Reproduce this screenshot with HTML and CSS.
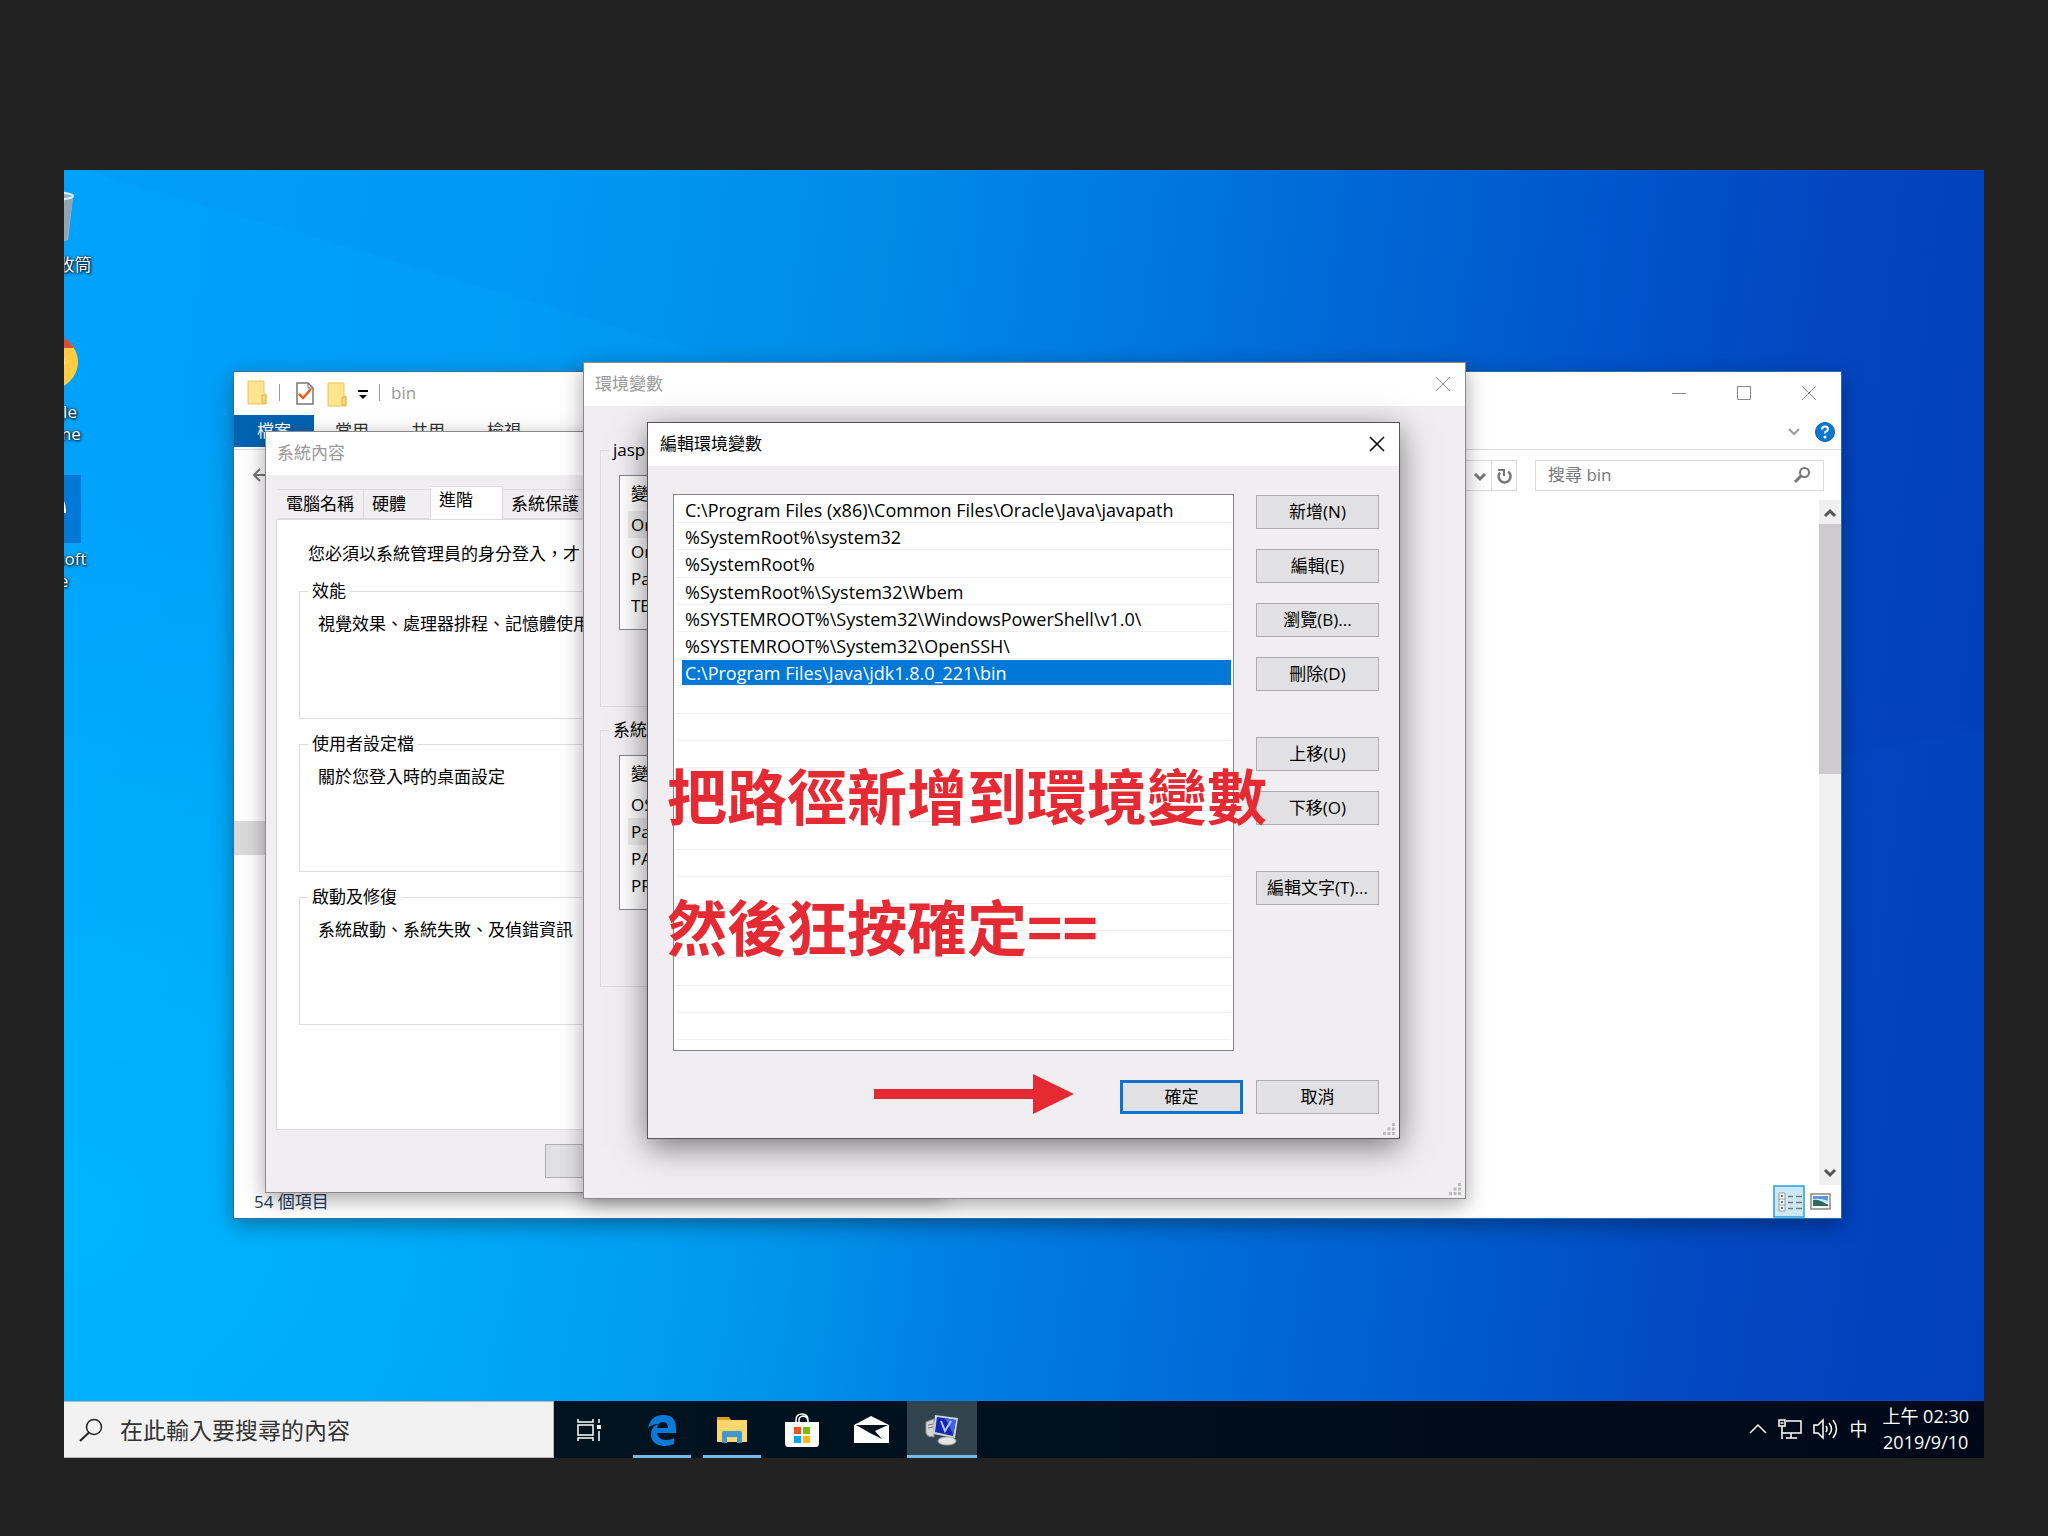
FILE: index.html
```html
<!DOCTYPE html>
<html lang="zh-Hant">
<head>
  <meta charset="UTF-8">
  <title>編輯環境變數</title>
  <link rel="stylesheet" href="styles.css">
</head>
<body>
  <div class="screen">
    <main class="desktop">
      <svg class="beams" viewBox="0 0 1920 1231" preserveAspectRatio="none">
        <polygon points="20,0 800,230 1920,560 1920,0" fill="#0050c8" opacity="0.04"/>
        <polygon points="0,900 1920,560 1920,1231 0,1231" fill="#00a0ff" opacity="0.03"/>
      </svg>

      <div class="shortcuts">
        <div class="shortcut">
          <svg width="68" height="68" viewBox="0 0 68 68">
            <path d="M10 16l5 43q19 5 38 0l5-43z" fill="#a9bcc6"/>
            <path d="M50 17l8-1-6 43-8 2z" fill="#8fa5b1"/>
            <ellipse cx="34" cy="15" rx="24" ry="4" fill="#7fb4d6" stroke="#dfe9ee" stroke-width="2"/>
          </svg>
          <span>資源回收筒</span>
        </div>
        <div class="shortcut">
          <svg width="68" height="68" viewBox="0 0 68 68">
            <circle cx="36" cy="34" r="27" fill="#fc4"/>
            <path d="M12 20A27 27 0 0 1 59 20z" fill="#e04a35"/>
            <path d="M12 20A27 27 0 0 0 30 60L38 40z" fill="#2ba24c"/>
            <circle cx="36" cy="34" r="12" fill="#4285f4" stroke="#fff" stroke-width="3"/>
          </svg>
          <span>Google<br>Chrome</span>
        </div>
        <div class="shortcut">
          <svg width="68" height="68" viewBox="0 0 68 68">
            <path d="M0 0h66v68H0z" fill="#0078d7"/>
            <path d="M13 38q2-22 20-22 18 0 18 22H25q2 10 22 4v8q-30 8-32-12z" fill="#fff"/>
          </svg>
          <span>Microsoft<br>Edge</span>
        </div>
      </div>

      <!-- file explorer -->
      <section class="window explorer">
        <header class="titlebar">
          <svg class="quick" width="160" height="28" viewBox="0 0 160 28">
            <path d="M1 2h16v13h2v10H1z" fill="#ffe58f" stroke="#e8c55a"/>
            <path d="M15 24v-8h4v8z" fill="#f7d774" stroke="#e0b94c"/>
            <path d="M32.500 5v17M132.500 5v17" stroke="#999"/>
            <path d="M50 4h11l5 5v16H50z" fill="#fff" stroke="#777" stroke-width="1.500"/>
            <path d="M61 4v5h5" fill="none" stroke="#777"/>
            <path d="M52 15l4 4 8-9" fill="none" stroke="#e8601c" stroke-width="2.500"/>
            <path d="M81 4h16v13h2v10H81z" fill="#ffe58f" stroke="#e8c55a"/>
            <path d="M95 26v-8h4v8z" fill="#f7d774" stroke="#e0b94c"/>
            <path d="M111 11h10v2h-10zM112 16h8l-4 4z" fill="#000"/>
          </svg>
          <h2 class="dim">bin</h2>
          <button class="control" aria-label="最小化"><svg width="16" height="16"><path d="M1 8.500h14" stroke="#888"/></svg></button>
          <button class="control" aria-label="最大化"><svg width="16" height="16"><path d="M1.500 1.500h13v13h-13z" fill="none" stroke="#888"/></svg></button>
          <button class="control" aria-label="關閉"><svg width="16" height="16"><path d="M1 1l14 14M15 1L1 15" stroke="#888"/></svg></button>
        </header>
        <nav class="ribbon">
          <button class="file">檔案</button>
          <button>常用</button>
          <button>共用</button>
          <button>檢視</button>
          <svg class="ribbon-end" width="50" height="22" viewBox="0 0 50 22">
            <path d="M3 8l5 5 5-5" fill="none" stroke="#999" stroke-width="2"/>
            <circle cx="39" cy="11" r="9.500" fill="#0a78d0" stroke="#0b5ea6"/>
            <path d="M36 8.500q0-3 3-3t3 2.500q0 1.500-2 2.500-1 .5-1 2" fill="none" stroke="#fff" stroke-width="2"/>
            <circle cx="39" cy="16" r="1.500" fill="#fff"/>
          </svg>
        </nav>
        <div class="address">
          <svg class="back" width="20" height="20" viewBox="0 0 20 20"><path d="M10 4l-6 6 6 6M4 10h14" fill="none" stroke="#777" stroke-width="2"/></svg>
          <div class="path">
            <svg width="51" height="29" viewBox="0 0 51 29">
              <path d="M10 13l5 5 5-5" fill="none" stroke="#777" stroke-width="3"/>
              <path d="M26.500 0v29" stroke="#d9d9d9"/>
              <path d="M35 11.500a6 6 0 1 0 8-1" fill="none" stroke="#777" stroke-width="2.500"/>
              <path d="M33 9h6v6" fill="none" stroke="#777" stroke-width="2"/>
            </svg>
          </div>
          <label class="search">
            <input type="text" placeholder="搜尋 bin" aria-label="搜尋 bin">
            <svg width="18" height="18" viewBox="0 0 18 18"><circle cx="11.500" cy="6.500" r="4.500" fill="none" stroke="#777" stroke-width="2"/><path d="M8 10l-6 6" stroke="#777" stroke-width="3"/></svg>
          </label>
        </div>
        <div class="files">
          <div class="tree"><div class="tree-selected"></div></div>
          <div class="scrollbar">
            <svg width="22" height="24" viewBox="0 0 22 24"><path d="M6 16l5-5 5 5" fill="none" stroke="#555" stroke-width="3"/></svg>
            <div class="thumb"></div>
            <svg width="22" height="24" viewBox="0 0 22 24"><path d="M6 9l5 5 5-5" fill="none" stroke="#555" stroke-width="3"/></svg>
          </div>
        </div>
        <footer class="status">
          <span>54 個項目</span>
          <svg width="68" height="33" viewBox="0 0 68 33">
            <path d="M1 1h30v31H1z" fill="#cce8f6" stroke="#26a0da" stroke-width="1.500"/>
            <path d="M6 8h6v18H6zM6 14h6M6 20h6" fill="#fff" stroke="#999"/>
            <path d="M8 11h2M8 17h2M8 23h2" stroke="#3a78c0" stroke-width="2"/>
            <path d="M15 11.500h5M23 11.500h6M15 17.500h5M23 17.500h6M15 23.500h5M23 23.500h6" stroke="#777" stroke-width="1.500"/>
            <path d="M38 9h19v15H38z" fill="#fff" stroke="#888" stroke-width="1.500"/>
            <path d="M40 11h15v10H40z" fill="#5a95e0"/>
            <path d="M40 14q8-1 15 2v3H40z" fill="#d5eaf8"/>
            <path d="M40 15q6-1 15 5v1H40z" fill="#2f6b5a"/>
          </svg>
        </footer>
      </section>

      <!-- system properties -->
      <section class="window system">
        <header class="titlebar"><h2 class="dim">系統內容</h2></header>
        <div class="tabs">
          <button class="tab">電腦名稱</button>
          <button class="tab">硬體</button>
          <button class="tab active">進階</button>
          <button class="tab">系統保護</button>
        </div>
        <div class="panel">
          <p class="intro">您必須以系統管理員的身分登入，才</p>
          <fieldset class="group">
            <legend>效能</legend>
            <p>視覺效果、處理器排程、記憶體使用</p>
          </fieldset>
          <fieldset class="group">
            <legend>使用者設定檔</legend>
            <p>關於您登入時的桌面設定</p>
          </fieldset>
          <fieldset class="group">
            <legend>啟動及修復</legend>
            <p>系統啟動、系統失敗、及偵錯資訊</p>
          </fieldset>
        </div>
        <div class="system-foot"><button class="btn" aria-label="確定"></button></div>
      </section>

      <!-- environment variables -->
      <section class="window variables">
        <header class="titlebar">
          <h2 class="dim">環境變數</h2>
          <button class="close" aria-label="關閉"><svg width="16" height="16"><path d="M1 1l14 14M15 1L1 15" stroke="#999"/></svg></button>
        </header>
        <div class="variables-body">
          <fieldset class="group">
            <legend>jasp</legend>
            <div class="listview">
              <table>
                <tr><th>變</th></tr>
                <tr class="marked"><td>On</td></tr>
                <tr><td>On</td></tr>
                <tr><td>Pa</td></tr>
                <tr><td>TE</td></tr>
              </table>
            </div>
          </fieldset>
          <fieldset class="group">
            <legend>系統</legend>
            <div class="listview">
              <table>
                <tr><th>變</th></tr>
                <tr><td>OS</td></tr>
                <tr class="marked"><td>Pa</td></tr>
                <tr><td>PA</td></tr>
                <tr><td>PR</td></tr>
              </table>
            </div>
          </fieldset>
        </div>
        <svg class="grip" width="12" height="12"><path d="M9 0h3v3H9zM9 4.500h3v3H9zM9 9h3v3H9zM4.500 4.500h3v3h-3zM4.500 9h3v3h-3zM0 9h3v3H0z" fill="#bbb"/></svg>
      </section>

      <!-- edit environment variable -->
      <section class="window edit">
        <header class="titlebar">
          <h2>編輯環境變數</h2>
          <button class="close" aria-label="關閉"><svg width="16" height="16"><path d="M1 1l14 14M15 1L1 15" stroke="#000" stroke-width="1.500"/></svg></button>
        </header>
        <div class="edit-body">
          <ul class="paths">
            <li><span>C:\Program Files (x86)\Common Files\Oracle\Java\javapath</span></li>
            <li><span>%SystemRoot%\system32</span></li>
            <li><span>%SystemRoot%</span></li>
            <li><span>%SystemRoot%\System32\Wbem</span></li>
            <li><span>%SYSTEMROOT%\System32\WindowsPowerShell\v1.0\</span></li>
            <li><span>%SYSTEMROOT%\System32\OpenSSH\</span></li>
            <li class="selected"><span>C:\Program Files\Java\jdk1.8.0_221\bin</span></li>
            <li></li><li></li><li></li><li></li><li></li><li></li>
            <li></li><li></li><li></li><li></li><li></li><li></li><li></li>
          </ul>
          <div class="actions">
            <div class="action-group">
              <button class="btn">新增(N)</button>
              <button class="btn">編輯(E)</button>
              <button class="btn">瀏覽(B)...</button>
              <button class="btn">刪除(D)</button>
            </div>
            <div class="action-group">
              <button class="btn">上移(U)</button>
              <button class="btn">下移(O)</button>
            </div>
            <div class="action-group">
              <button class="btn">編輯文字(T)...</button>
            </div>
          </div>
        </div>
        <div class="edit-foot">
          <button class="btn primary">確定</button>
          <button class="btn">取消</button>
        </div>
        <svg class="grip" width="12" height="12"><path d="M9 0h3v3H9zM9 4.500h3v3H9zM9 9h3v3H9zM4.500 4.500h3v3h-3zM4.500 9h3v3h-3zM0 9h3v3H0z" fill="#bbb"/></svg>
      </section>

      <!-- red notes over the dialog -->
      <div class="note">
        <p>把路徑新增到環境變數</p>
        <p>然後狂按確定==</p>
      </div>
      <svg class="arrow" width="200" height="40" viewBox="0 0 200 40"><path d="M0 15h159V0l41 20-41 20V25H0z" fill="#e52a33"/></svg>
    </main>

    <footer class="taskbar">
      <label class="task-search">
        <svg width="24" height="24" viewBox="0 0 24 24"><circle cx="15" cy="9" r="7.500" fill="none" stroke="#222" stroke-width="1.500"/><path d="M10 14.500L1 23" stroke="#222" stroke-width="2"/></svg>
        <input type="text" placeholder="在此輸入要搜尋的內容" aria-label="在此輸入要搜尋的內容">
      </label>
      <button class="task view" aria-label="工作檢視">
        <svg width="26" height="24" viewBox="0 0 26 24" fill="none" stroke="#fff" stroke-width="1.500"><path d="M2 1v3h15V1M2 7h15v10H2zM2 23v-3h15v3M23 1v4M23 13v10"/><path d="M21 7h4v4h-4z" fill="#fff" stroke="none"/></svg>
      </button>
      <button class="task open" aria-label="Edge">
        <svg width="30" height="32" viewBox="0 0 30 32"><path d="M1 14Q4 1 16 1q13 0 13 13v5H10q1 7 9 7 5 0 8-2v6q-4 2-10 2Q4 31 4 20 4 13 11 10 5 10 1 14zM10 14h11q0-6-5-6-5 0-6 6z" fill="#0a7ad8"/></svg>
      </button>
      <button class="task open" aria-label="檔案總管">
        <svg width="32" height="28" viewBox="0 0 32 28"><path d="M1 1h12l2 3H1z" fill="#dd9a13"/><path d="M1 4h30v22H1z" fill="#ffd76a"/><path d="M6 27V17q0-2 2-2h16q2 0 2 2v10h-5v-6H11v6z" fill="#3f97d3"/></svg>
      </button>
      <button class="task" aria-label="Microsoft Store">
        <svg width="34" height="34" viewBox="0 0 34 34"><path d="M11 12V7q0-6 6-6t6 6v5M14 9V6q1-3 5-3 4 1 4 6" fill="none" stroke="#fff" stroke-width="1.500"/><path d="M0 9h34v21q0 4-3 4H3q-3 0-3-4z" fill="#fff"/><path d="M9 14h7v7H9z" fill="#f25022"/><path d="M18 14h7v7h-7z" fill="#7fba00"/><path d="M9 23h7v7H9z" fill="#00a4ef"/><path d="M18 23h7v7h-7z" fill="#ffb900"/></svg>
      </button>
      <button class="task" aria-label="郵件">
        <svg width="36" height="28" viewBox="0 0 36 28"><path d="M0 9L17 0l18 9v18H0z" fill="#fff"/><path d="M2 9h32l-13 6 7 8-12-6z" fill="#06131d"/></svg>
      </button>
      <button class="task running" aria-label="系統內容">
        <svg width="34" height="32" viewBox="0 0 34 32"><path d="M1 8l8-3v18l-6-1-2-3z" fill="#d5d7d2" stroke="#8d9496"/><path d="M3 11l5-1M3 14l5-1" stroke="#777"/><ellipse cx="22" cy="27" rx="9" ry="4" fill="#e4e4e4" stroke="#aaa"/><path d="M10 1l23 3-3 20-22-4z" fill="#c9d2dc"/><path d="M12 3l19 3-3 16-18-4z" fill="#1226b4"/><path d="M20 4l11 2-3 14z" fill="#3f63e6"/><path d="M16 7l4 10 6-10" fill="none" stroke="#b9c9ff" stroke-width="2"/></svg>
      </button>
      <div class="tray">
        <svg width="18" height="12" viewBox="0 0 18 12"><path d="M1 10l8-8 8 8" fill="none" stroke="#fff" stroke-width="1.500"/></svg>
        <svg width="26" height="22" viewBox="0 0 26 22" fill="none" stroke="#fff" stroke-width="1.500"><path d="M9 3h15v12H5M14 15v5M9 20h11M2 2h6v6H2zM5 8v13M3.500 5h3"/></svg>
        <svg width="26" height="22" viewBox="0 0 26 22" fill="none" stroke="#fff" stroke-width="1.500"><path d="M1 7h4l5-5v18l-5-5H1zM13 8q2 3 0 6M16 5q5 6 0 12M20 2q7 9 0 18"/></svg>
        <span class="ime">中</span>
        <div class="clock">上午 02:30<br>2019/9/10</div>
      </div>
    </footer>
  </div>
</body>
</html>
```
FILE: styles.css
```css
* { box-sizing: border-box; }
body { margin: 0; background: #222; color: #000; font: 17px/22px "Open Sans", "Noto Sans CJK TC", sans-serif; }
p, h2, ul { margin: 0; padding: 0; font-size: 17px; font-weight: normal; }
button, input { font: inherit; color: inherit; border: 0; background: none; padding: 0; margin: 0; }
input { outline: 0; min-width: 0; }
svg { display: block; flex: none; }

.screen { display: flex; flex-direction: column; min-height: 100vh; padding: 170px 64px 78px; }
.desktop {
  position: relative; flex: 1; min-height: 1100px; overflow: hidden;
  background:
    radial-gradient(ellipse 900px 800px at 0% 85%, rgba(0,184,255,.9), rgba(0,180,255,0)),
    linear-gradient(97deg, #00a2fb 0%, #009df5 22%, #008ee9 40%, #0076de 55%, #0058cc 74%, #0446c0 86%, #033db8 100%);
}
.beams { position: absolute; inset: 0; width: 100%; height: 100%; }

/* desktop icons */
.shortcuts { position: absolute; left: -65px; top: 11px; width: 100px; display: grid; grid-auto-rows: 147px; }
.shortcut { display: flex; flex-direction: column; align-items: center; gap: 5px; color: #fff; text-align: center; text-shadow: 1px 1px 3px #000, 0 0 2px #000; }
.shortcut span { white-space: nowrap; }

/* windows */
.window { position: absolute; display: flex; flex-direction: column; background: #f0eef0; border: 1px solid #8a8a8a; box-shadow: 0 6px 20px rgba(0,0,0,.35); }
.titlebar { display: flex; align-items: center; height: 43px; background: #fff; padding: 0 0 2px 11px; flex: none; }
.titlebar h2 { flex: 1; }
.titlebar .dim { color: #999; }
.control { width: 65px; height: 41px; display: grid; place-items: center; }
.close { width: 44px; height: 41px; display: grid; place-items: center; }
.btn { width: 123px; height: 34px; background: #e1e0e2; border: 1px solid #adadad; line-height: 22px; white-space: nowrap; }
.btn.primary { border: 3px solid #0a74cf; }
.grip { position: absolute; right: 4px; bottom: 3px; }
.group { min-width: 0; margin: 0; padding: 0; border: 1px solid #dcdcdc; }
.group legend { margin-left: -10px; padding: 0 4px; }

/* file explorer */
.explorer { left: 169px; right: 142px; top: 201px; height: 848px; background: #fff; border-color: #2a6fa8; }
.explorer .titlebar { padding-left: 13px; }
.explorer .quick { margin-right: -16px; }
.ribbon { display: flex; height: 35px; border-bottom: 1px solid #dadbdc; color: #333; }
.ribbon button { width: 76px; height: 32px; }
.ribbon .file { width: 80px; background: #0063b1; color: #fff; }
.ribbon-end { margin: 6px 5px 0 auto; }
.address { display: flex; align-items: center; height: 50px; padding: 0 17px 0 16px; color: #777; }
.path { flex: 1; height: 31px; border: 1px solid #d9d9d9; margin: 0 18px 0 90px; display: flex; justify-content: flex-end; }
.search { display: flex; align-items: center; width: 289px; height: 31px; border: 1px solid #d9d9d9; padding: 0 12px; }
.search input { flex: 1; }
.search input::placeholder { color: #777; opacity: 1; }
.files { flex: 1; display: flex; justify-content: space-between; }
.tree { width: 220px; padding-top: 321px; }
.tree-selected { height: 34px; background: #d9d9d9; }
.scrollbar { width: 22px; background: #f0f0f0; display: flex; flex-direction: column; }
.thumb { height: 250px; background: #cdcbcd; margin-bottom: auto; }
.status { height: 33px; display: flex; align-items: center; justify-content: space-between; padding-left: 20px; color: #1e395b; }

/* system properties */
.system { left: 201px; top: 261px; width: 681px; height: 762px; }
.tabs { display: flex; align-items: flex-end; height: 44px; padding: 0 12px; }
.tab { height: 30px; min-width: 67px; padding: 0 9px 0 8px; text-align: left; background: #f0eef0; border: 1px solid #dcdcdc; border-left: 0; }
.tab.active { width: 72px; height: 33px; background: #fff; border-bottom: 0; padding-bottom: 6px; }
.panel { flex: 1; margin: 0 10px; padding: 23px 22px; background: #fff; border: 1px solid #dcdcdc; }
.intro { margin: 0 0 15px 9px; white-space: nowrap; }
.panel .group { height: 139px; padding: 11px 18px; margin-bottom: 14px; }
.system-foot { display: flex; padding: 14px 0 14px 279px; }

/* environment variables */
.variables { left: 519px; top: 192px; width: 883px; height: 837px; }
.variables-body { width: 800px; padding: 33px 16px; }
.variables .group { height: 268px; padding: 14px 18px; margin-bottom: 12px; }
.listview { height: 155px; background: #fff; border: 1px solid #828790; padding-left: 8px; }
.listview table { width: 100%; border-collapse: collapse; }
.listview th { height: 35px; font-weight: normal; text-align: left; padding: 0 3px; }
.listview td { height: 27px; padding: 0 3px; }
.marked { background: #eee; }

/* edit dialog */
.edit { left: 583px; top: 252px; width: 753px; height: 717px; border-color: #555; box-shadow: 0 8px 30px rgba(0,0,0,.5); }
.edit .titlebar { padding-left: 12px; }
.edit-body { display: flex; gap: 22px; padding: 28px 20px 0 25px; }
.paths { flex: 1; height: 557px; background: #fff; border: 1px solid #828790; list-style: none; display: grid; grid-template-rows: repeat(20, 1fr); padding: 1px 2px 10px; }
.paths li { border-bottom: 1px solid #eef0f4; padding: 1px 0 0 6px; min-height: 0; }
.paths span { display: block; height: 25px; line-height: 26px; padding: 0 3px; font-size: 18px; white-space: nowrap; }
.paths .selected span { background: #0078d7; color: #fff; }
.actions { display: flex; flex-direction: column; gap: 46px; padding-top: 1px; }
.action-group { display: flex; flex-direction: column; gap: 20px; }
.edit-foot { display: flex; justify-content: flex-end; gap: 13px; padding: 29px 20px; }

/* notes */
.note { position: absolute; left: 603px; top: 558px; color: #e52a33; }
.note p { font-size: 60px; line-height: 131px; font-weight: bold; font-family: "Noto Sans CJK TC", sans-serif; white-space: nowrap; }
.arrow { position: absolute; left: 810px; top: 904px; }

/* taskbar */
.taskbar { display: flex; height: 57px; background: linear-gradient(90deg, #001722, #00101c 50%, #000818); color: #fff; }
.task-search { display: flex; align-items: center; width: 490px; gap: 17px; padding: 0 15px; background: #f2f2f2; border: 1px solid #bbb; border-left: 0; }
.task-search input { flex: 1; font-size: 23px; line-height: 30px; height: 34px; }
.task-search input::placeholder { color: #333; opacity: 1; }
.task { width: 70px; display: grid; place-items: center; position: relative; }
.task.view { margin-right: 3px; }
.task.open::after, .task.running::after { content: ""; position: absolute; bottom: 0; left: 6px; right: 6px; height: 3px; background: #76b9ed; }
.task.running { background: #33434d; }
.task.running::after { left: 0; right: 0; }
.tray { margin-left: auto; display: flex; align-items: center; gap: 10px; padding: 0 15px 2px 0; }
.ime { font-size: 18px; }
.clock { font-size: 18px; line-height: 26px; text-align: center; margin-left: 5px; }
```
